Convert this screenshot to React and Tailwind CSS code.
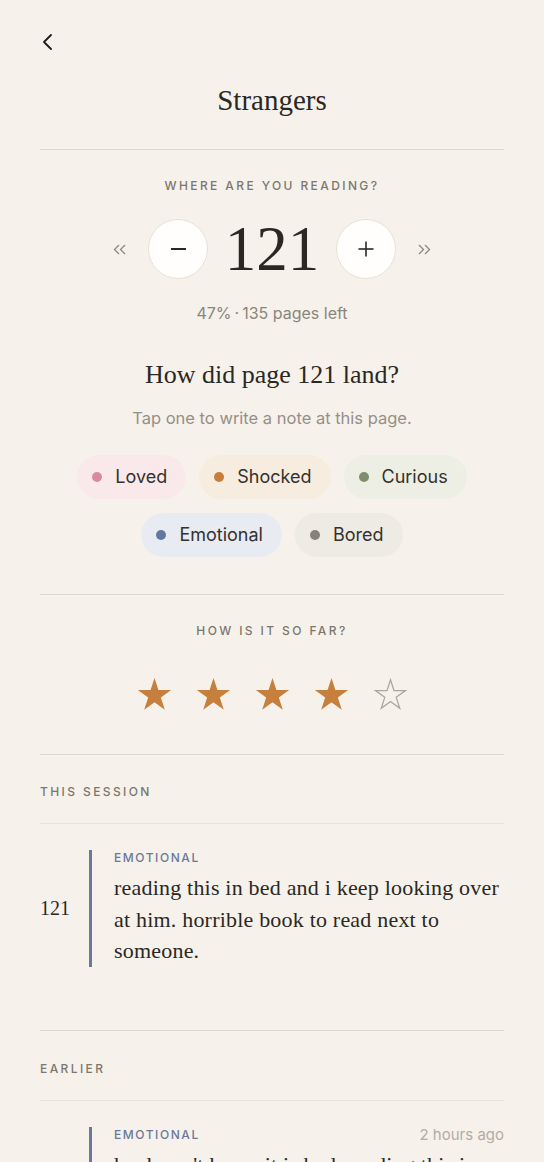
import React from "react";

const SANS = { fontFamily: "Inter, 'Noto Sans', sans-serif" };
const SERIF = { fontFamily: "'Liberation Serif', 'DejaVu Serif', serif" };

function Star({ filled }) {
  return (
    <svg width="35" height="35" viewBox="0 0 100 100" className="block">
      <polygon
        points="50,0 61.17,34.63 97.55,34.55 68.07,55.87 79.39,90.45 50,69 20.61,90.45 31.93,55.87 2.45,34.55 38.83,34.63"
        fill={filled ? "#c67f3c" : "none"}
        stroke={filled ? "none" : "#a9a59f"}
        strokeWidth={filled ? 0 : 4}
        strokeLinejoin="miter"
        transform={filled ? undefined : "translate(5 5) scale(0.9)"}
      />
    </svg>
  );
}

function Chip({ label, dot, bg }) {
  return (
    <div className={`flex items-center h-[44px] pl-[15px] pr-[19px] rounded-full ${bg}`}>
      <span className={`w-[10px] h-[10px] rounded-full ${dot}`} />
      <span className="ml-[13px] text-[18px] text-[#35312c] leading-none" style={SANS}>
        {label}
      </span>
    </div>
  );
}

function Label({ children, className = "", color = "text-[#7b766e]", tracking = "tracking-[0.2em]" }) {
  return (
    <div
      className={`text-[12px] leading-[16px] ${tracking} ${color} font-medium uppercase ${className}`}
      style={SANS}
    >
      {children}
    </div>
  );
}

function Divider({ light, className = "" }) {
  return <div className={`h-px ${light ? "bg-[#e7e2d9]" : "bg-[#dcd7ce]"} ${className}`} />;
}

export default function App() {
  return (
    <div className="min-h-[1162px] bg-[#f6f2eb] px-10 overflow-hidden">
      {/* back */}
      <div className="pt-[34px]">
        <svg width="12" height="16" viewBox="0 0 12 16" className="block ml-[2px]" fill="none">
          <polyline points="9,1 2,8 9,15" stroke="#1f1d1a" strokeWidth="1.8" strokeLinecap="round" strokeLinejoin="round" />
        </svg>
      </div>

      <h1 className="mt-[32px] text-center text-[29px] leading-[36px] text-[#2b2824]" style={SERIF}>
        Strangers
      </h1>

      <Divider className="mt-[31px]" />

      <Label className="mt-[28px] text-center">Where are you reading?</Label>

      {/* stepper */}
      <div className="mt-[23px] flex items-center justify-center">
        <svg width="14" height="11" viewBox="0 0 14 11" fill="none" className="block">
          <polyline points="6,1 1.5,5.5 6,10" stroke="#8c877f" strokeWidth="1.3" />
          <polyline points="12,1 7.5,5.5 12,10" stroke="#8c877f" strokeWidth="1.3" />
        </svg>
        <button className="ml-[21px] w-[60px] h-[60px] rounded-full bg-[#fffefc] border border-[#e6e1d8] flex items-center justify-center">
          <span className="block w-[15px] h-[1.6px] bg-[#2b2824]" />
        </button>
        <div
          className="mx-[16px] w-[96px] text-center text-[63px] leading-[64px] font-light text-[#2b2824]"
          style={SERIF}
        >
          121
        </div>
        <button className="w-[60px] h-[60px] rounded-full bg-[#fffefc] border border-[#e6e1d8] flex items-center justify-center">
          <svg width="16" height="16" viewBox="0 0 16 16" className="block">
            <line x1="8" y1="0.5" x2="8" y2="15.5" stroke="#2b2824" strokeWidth="1.6" />
            <line x1="0.5" y1="8" x2="15.5" y2="8" stroke="#2b2824" strokeWidth="1.6" />
          </svg>
        </button>
        <svg width="14" height="11" viewBox="0 0 14 11" fill="none" className="block ml-[21px]">
          <polyline points="2,1 6.5,5.5 2,10" stroke="#8c877f" strokeWidth="1.3" />
          <polyline points="8,1 12.5,5.5 8,10" stroke="#8c877f" strokeWidth="1.3" />
        </svg>
      </div>

      <div className="mt-[22px] text-center text-[16px] leading-[20px] text-[#8a857d]" style={SANS}>
        47%<span className="mx-[3px]">·</span>135 pages left
      </div>

      <div className="mt-[36px] text-center text-[26px] leading-[32px] text-[#2b2824]" style={SERIF}>
        How did page 121 land?
      </div>

      <div className="mt-[16px] text-center text-[16.5px] leading-[22px] text-[#958f87]" style={SANS}>
        Tap one to write a note at this page.
      </div>

      <div className="mt-[26px] flex flex-col items-center gap-[14px]">
        <div className="flex gap-[13px]">
          <Chip label="Loved" dot="bg-[#d98aa3]" bg="bg-[#fae9eb]" />
          <Chip label="Shocked" dot="bg-[#c97d3a]" bg="bg-[#f6ede0]" />
          <Chip label="Curious" dot="bg-[#7f8f6b]" bg="bg-[#edefe5]" />
        </div>
        <div className="flex gap-[13px]">
          <Chip label="Emotional" dot="bg-[#6477a0]" bg="bg-[#e9ebf2]" />
          <Chip label="Bored" dot="bg-[#86817a]" bg="bg-[#eeeae4]" />
        </div>
      </div>

      <Divider className="mt-[37px]" />

      <Label className="mt-[28px] text-center">How is it so far?</Label>

      <div className="mt-[39px] flex justify-center gap-[24px]">
        <Star filled />
        <Star filled />
        <Star filled />
        <Star filled />
        <Star />
      </div>

      <Divider className="mt-[41px]" />

      <Label className="mt-[29px]">This session</Label>

      <Divider light className="mt-[23px]" />

      {/* note */}
      <div className="mt-[26px] flex items-center">
        <div className="w-[49px] text-[20px] text-[#2b2824]" style={SERIF}>121</div>
        <div className="self-stretch w-[3px] bg-[#6b7899]" />
        <div className="pl-[22px] flex-1">
          <Label color="text-[#6b7898]" tracking="tracking-[0.13em]">Emotional</Label>
          <div className="mt-[6px] text-[22px] leading-[31.5px] tracking-[0.2px] text-[#2b2824]" style={SERIF}>
            reading this in bed and i keep looking over at him. horrible book to read next to someone.
          </div>
        </div>
      </div>

      <Divider className="mt-[63px]" />

      <Label className="mt-[30px]">Earlier</Label>

      <Divider light className="mt-[23px]" />

      <div className="mt-[26px] flex">
        <div className="w-[49px]" />
        <div className="self-stretch w-[3px] bg-[#6b7899]" />
        <div className="pl-[22px] flex-1">
          <div className="flex items-center justify-between">
            <Label color="text-[#6b7898]" tracking="tracking-[0.13em]">Emotional</Label>
            <span className="text-[15px] leading-[16px] text-[#b2aca4]" style={SANS}>2 hours ago</span>
          </div>
          <div className="mt-[6px] text-[22px] leading-[31.5px] tracking-[0.2px] text-[#2b2824]" style={SERIF}>
            he doesn't know it is bad. reading this in bed while he sleeps beside me.
          </div>
        </div>
      </div>
    </div>
  );
}
